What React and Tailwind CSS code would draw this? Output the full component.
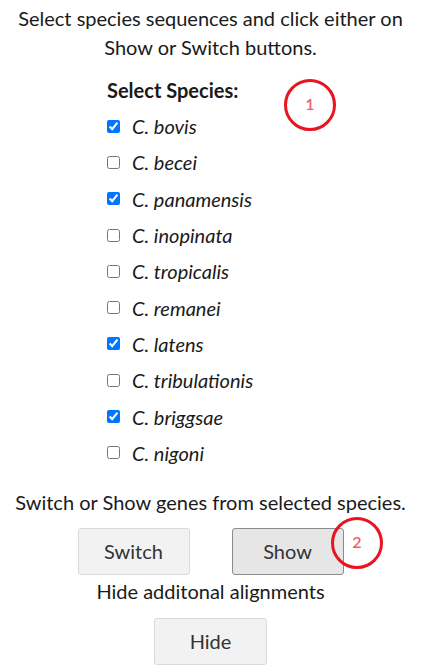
import React from "react";

const species = [
  { name: "C. bovis", checked: true },
  { name: "C. becei", checked: false },
  { name: "C. panamensis", checked: true },
  { name: "C. inopinata", checked: false },
  { name: "C. tropicalis", checked: false },
  { name: "C. remanei", checked: false },
  { name: "C. latens", checked: true },
  { name: "C. tribulationis", checked: false },
  { name: "C. briggsae", checked: true },
  { name: "C. nigoni", checked: false },
];

const Marker = ({ n, className }) => (
  <div
    className={
      "absolute w-[52px] h-[52px] rounded-full border-[3px] border-[#e8141f] flex items-center justify-center pb-[3px] text-[16px] font-semibold text-[#f0606a] " +
      className
    }
  >
    {n}
  </div>
);

const App = () => {
  return (
    <div
      className="relative w-[421px] h-[672px] bg-white text-[#1a1a1a] overflow-hidden"
      style={{ fontFamily: "Lato, 'Liberation Sans', sans-serif" }}
    >
      <p className="text-center text-[20px] leading-[29px] pt-[4px]">
        Select species sequences and click either on
        <br />
        Show or Switch buttons.
      </p>

      <div className="ml-[107px] mt-[13px]">
        <h3 className="font-bold text-[20px] leading-[30px]">Select Species:</h3>
        <ul className="mt-[3px]">
          {species.map((s) => (
            <li key={s.name} className="flex items-center h-[36.3px]">
              <input
                type="checkbox"
                defaultChecked={s.checked}
                className="w-[13px] h-[13px] m-0"
              />
              <span className="ml-[12px] italic text-[20px]">{s.name}</span>
            </li>
          ))}
        </ul>
      </div>

      <p className="text-center text-[20px] leading-[29px] mt-[17px]">
        Switch or Show genes from selected species.
      </p>

      <div className="flex justify-center gap-[42px] mt-[11px]">
        <button className="w-[112px] h-[47px] rounded-[3px] bg-[#f2f2f2] border border-[#dadada] text-[20px] text-[#333]">
          Switch
        </button>
        <button className="w-[112px] h-[47px] rounded-[3px] bg-[#e6e6e6] border border-[#8c8c8c] text-[20px] text-[#333]">
          Show
        </button>
      </div>

      <p className="text-center text-[20px] leading-[29px] mt-[2px]">
        Hide additonal alignments
      </p>

      <div className="flex justify-center mt-[12px]">
        <button className="w-[113px] h-[47px] rounded-[3px] bg-[#f2f2f2] border border-[#dadada] text-[20px] text-[#333]">
          Hide
        </button>
      </div>

      <Marker n="1" className="left-[284px] top-[79px]" />
      <Marker n="2" className="left-[331px] top-[517px]" />
    </div>
  );
};

export default App;
